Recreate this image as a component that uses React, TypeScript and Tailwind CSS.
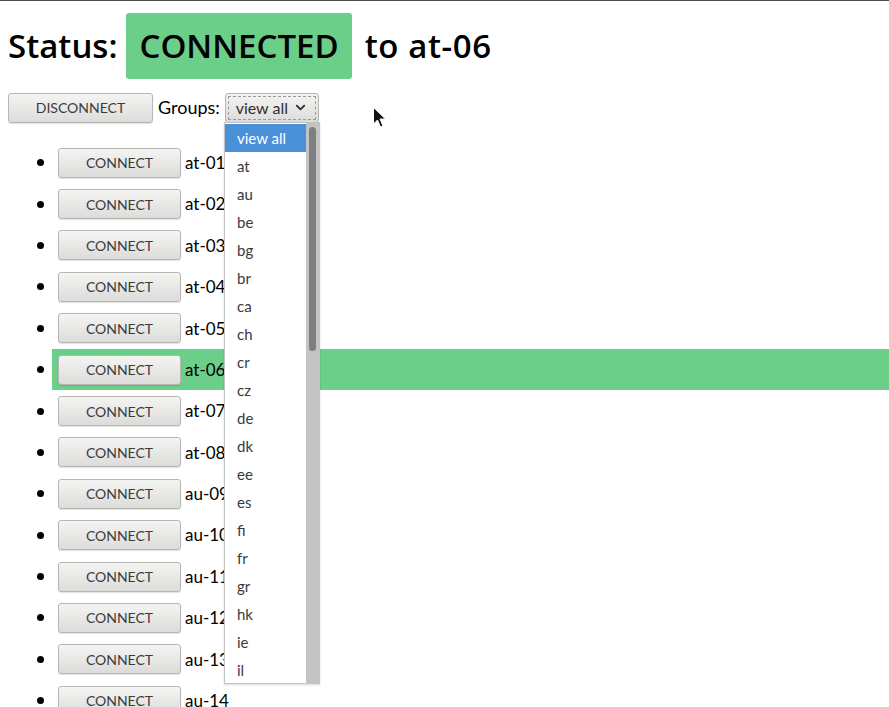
import { ChevronDown } from "lucide-react";

const servers = [
  "at-01", "at-02", "at-03", "at-04", "at-05", "at-06", "at-07",
  "at-08", "au-09", "au-10", "au-11", "au-12", "au-13", "au-14",
];

const groups = [
  "view all", "at", "au", "be", "bg", "br", "ca", "ch", "cr", "cz",
  "de", "dk", "ee", "es", "fi", "fr", "gr", "hk", "ie", "il",
];

const font = { fontFamily: "Lato, 'Open Sans', sans-serif" };
const headFont = { fontFamily: "'Open Sans', Lato, sans-serif" };

function GtkButton({ label, width }: { label: string; width: string }) {
  return (
    <button
      className={`${width} h-[30px] rounded-[3px] border border-[#b6b6b3] bg-gradient-to-b from-[#f4f4f3] to-[#dcdcda] text-[14px] text-[#3b3b3b] shadow-[0_1px_1px_rgba(0,0,0,0.12)]`}
    >
      {label}
    </button>
  );
}

export default function App() {
  return (
    <div className="relative h-[707px] w-[889px] overflow-hidden border-t border-[#4a4a4a] bg-white text-black" style={font}>
      <div className="flex items-center px-2 pt-[12px] text-[33px] font-semibold" style={headFont}>
        <span>Status:</span>
        <span className="ml-[9px] flex h-[66px] items-center rounded-[3px] bg-[#6bce89] px-[13px]">
          CONNECTED
        </span>
        <span className="ml-[13px] tracking-[0.6px]">to at-06</span>
      </div>

      <div className="relative mt-[13px] flex h-[31px] items-center px-2">
        <GtkButton label="DISCONNECT" width="w-[145px]" />
        <span className="ml-[5px] text-[18px]">Groups:</span>
        <div className="ml-[5px] flex h-[30px] w-[94px] items-center justify-center rounded-[3px] border border-[#b6b6b3] bg-gradient-to-b from-[#f4f4f3] to-[#dcdcda] p-[2px]">
          <div className="flex h-full w-full items-center justify-center gap-[5px] border border-dashed border-[#9a9a9a] text-[16px] text-[#2e2e2e]">
            view all <ChevronDown size={15} strokeWidth={3} />
          </div>
        </div>

        <div className="absolute left-[224px] top-[30px] z-10 flex h-[562px] w-[96px] border border-[#c4c4c4] bg-white shadow-[0_1px_2px_rgba(0,0,0,0.15)]">
          <div className="flex w-[81px] flex-col pt-px">
            {groups.map((g, i) => (
              <div
                key={g}
                className={`flex h-[28px] shrink-0 items-center pl-[12px] text-[15px] ${
                  i === 0 ? "bg-[#4a90d9] text-white" : "text-[#3a3a3a]"
                }`}
              >
                {g}
              </div>
            ))}
          </div>
          <div className="flex w-[13px] justify-center bg-[#c3c3c3] pt-[4px]">
            <div className="h-[224px] w-[7px] rounded-full bg-[#7f7f7f]" />
          </div>
        </div>

        <svg className="absolute left-[372px] top-[14px]" width="16" height="24" viewBox="0 0 16 24">
          <path d="M1.5 1.5 L1.5 18 L5.5 14 L8.5 21 L11 20 L8 13 L13.5 13 Z" fill="#111" stroke="#fff" strokeWidth="1" />
        </svg>
      </div>

      <ul className="mt-[19px] pl-[52px] text-[17px]">
        {servers.map((s, i) => (
          <li
            key={s}
            className={`relative flex h-[41.4px] items-center ${i === 5 ? "bg-[#6bce89]" : ""}`}
          >
            <span className="absolute left-[-15px] h-[7px] w-[7px] rounded-full bg-black" />
            <div className="ml-[6px]">
              <GtkButton label="CONNECT" width="w-[123px]" />
            </div>
            <span className="ml-[4px]">{s}</span>
          </li>
        ))}
      </ul>
    </div>
  );
}
